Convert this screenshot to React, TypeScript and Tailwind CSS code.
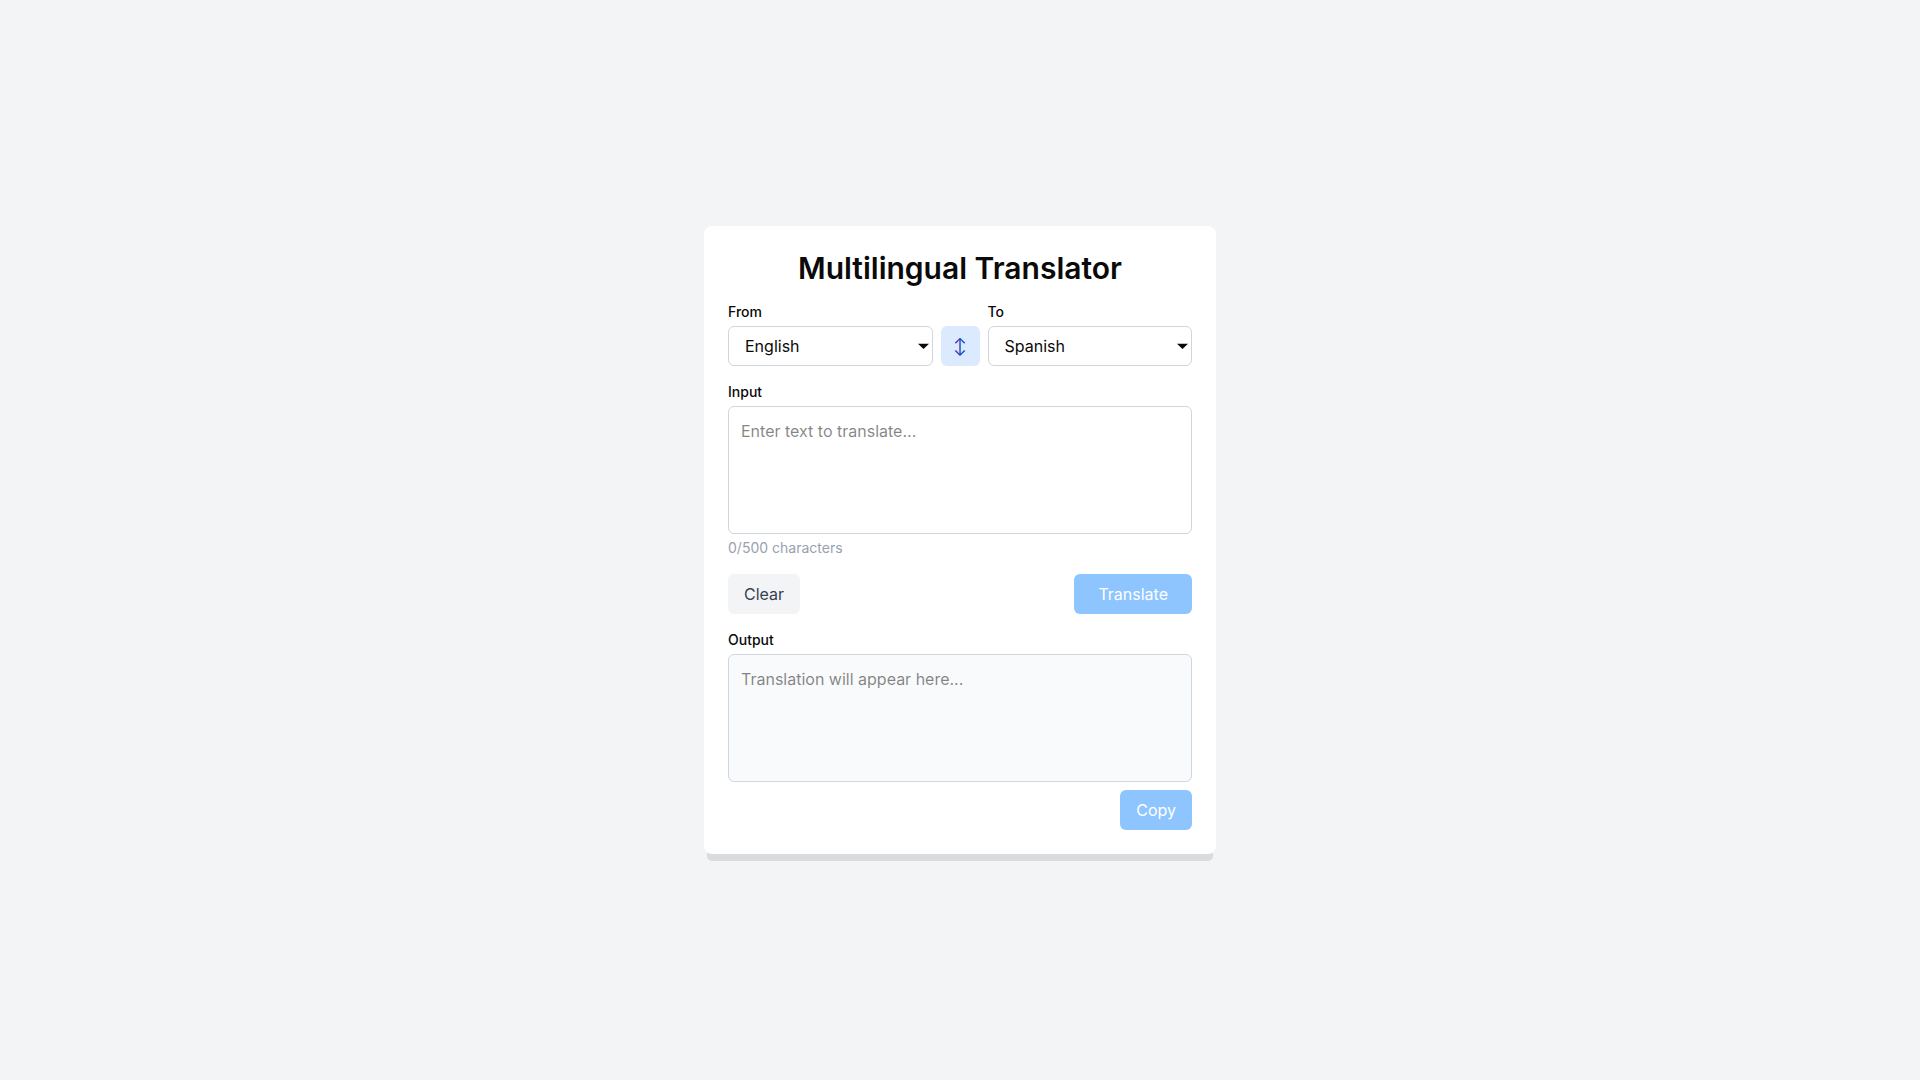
import { useId, useState } from "react";

const LANGUAGES = ["English", "Spanish", "French", "German", "Italian"];
const MAX_CHARS = 500;

interface LanguageSelectProps {
  label: string;
  value: string;
  onChange: (value: string) => void;
}

function LanguageSelect({ label, value, onChange }: LanguageSelectProps) {
  const id = useId();

  return (
    <div className="flex-1 min-w-0">
      <label htmlFor={id} className="block mb-1 text-sm font-medium">
        {label}
      </label>
      <div className="relative">
        <select
          id={id}
          value={value}
          onChange={(e) => onChange(e.target.value)}
          className="block w-full h-10 pl-4 pr-8 appearance-none rounded-md border border-gray-300 bg-white"
        >
          {LANGUAGES.map((language) => (
            <option key={language} value={language}>
              {language}
            </option>
          ))}
        </select>
        <svg
          viewBox="0 0 11 6"
          className="absolute right-1 inset-y-0 my-auto w-[11px] h-[6px] pointer-events-none"
          aria-hidden="true"
        >
          <path d="M0 .7h11L5.5 6z" fill="currentColor" />
        </svg>
      </div>
    </div>
  );
}

export default function App() {
  const [from, setFrom] = useState("English");
  const [to, setTo] = useState("Spanish");
  const [input, setInput] = useState("");
  const [output, setOutput] = useState("");
  const inputId = useId();
  const outputId = useId();

  const handleSwap = () => {
    setFrom(to);
    setTo(from);
  };

  const handleClear = () => {
    setInput("");
    setOutput("");
  };

  return (
    <main className="min-h-screen flex items-center justify-center bg-gray-100 font-['Inter',sans-serif] text-base text-[#0a0a0a]">
      <div className="w-full max-w-lg p-6 rounded-lg bg-white shadow-[0_10px_0_-3px_rgba(0,0,0,0.1)]">
        <h1 className="mb-4 text-3xl font-semibold text-center">
          Multilingual Translator
        </h1>

        <div className="flex items-end gap-2 mb-4">
          <LanguageSelect label="From" value={from} onChange={setFrom} />
          <button
            type="button"
            onClick={handleSwap}
            aria-label="Swap languages"
            className="shrink-0 w-[39px] h-10 rounded-md bg-blue-100 text-blue-800 hover:bg-blue-200"
          >
            ↕
          </button>
          <LanguageSelect label="To" value={to} onChange={setTo} />
        </div>

        <div className="mb-4">
          <label htmlFor={inputId} className="block mb-1 text-sm font-medium">
            Input
          </label>
          <textarea
            id={inputId}
            value={input}
            maxLength={MAX_CHARS}
            onChange={(e) => setInput(e.target.value)}
            placeholder="Enter text to translate..."
            className="block w-full h-32 p-3 resize-none rounded-md border border-gray-300"
          />
          <p className="mt-1 text-sm text-gray-400">
            {input.length}/{MAX_CHARS} characters
          </p>
        </div>

        <div className="flex justify-between mb-4">
          <button
            type="button"
            onClick={handleClear}
            className="h-10 px-4 rounded-md bg-gray-100 text-gray-700 hover:bg-gray-200"
          >
            Clear
          </button>
          <button
            type="button"
            disabled={!input.trim()}
            onClick={() => setOutput(input)}
            className="h-10 px-6 rounded-md bg-blue-500 text-white hover:bg-blue-600 disabled:bg-blue-300"
          >
            Translate
          </button>
        </div>

        <label htmlFor={outputId} className="block mb-1 text-sm font-medium">
          Output
        </label>
        <textarea
          id={outputId}
          value={output}
          readOnly
          placeholder="Translation will appear here..."
          className="block w-full h-32 p-3 resize-none rounded-md border border-gray-300 bg-gray-50"
        />
        <div className="flex justify-end mt-2">
          <button
            type="button"
            disabled={!output}
            onClick={() => navigator.clipboard.writeText(output)}
            className="h-10 px-4 rounded-md bg-blue-500 text-white hover:bg-blue-600 disabled:bg-blue-300"
          >
            Copy
          </button>
        </div>
      </div>
    </main>
  );
}
